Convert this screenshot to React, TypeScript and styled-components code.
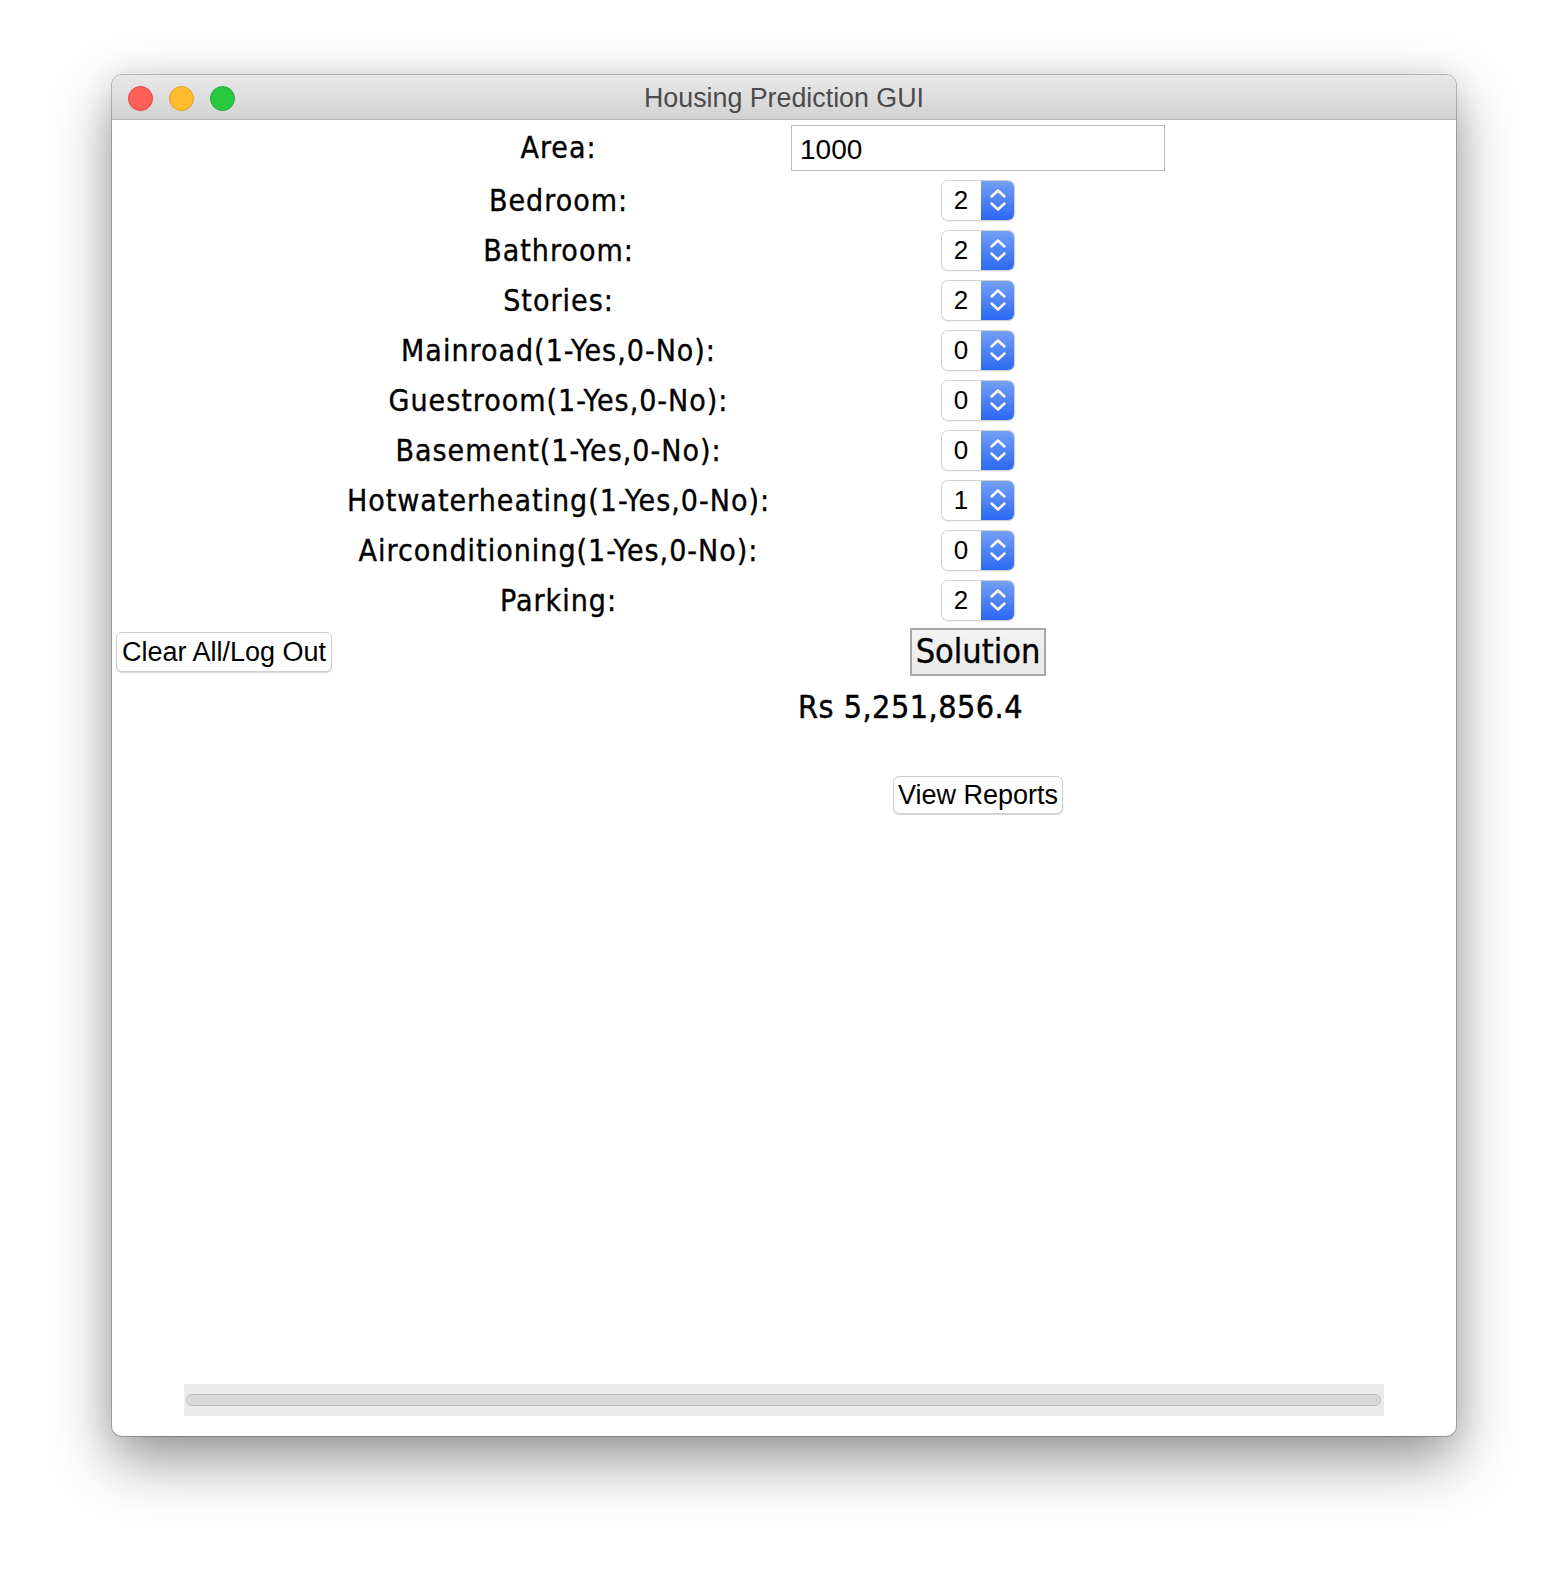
import styled, { createGlobalStyle } from "styled-components";

const GlobalStyle = createGlobalStyle`
  html, body {
    margin: 0;
    padding: 0;
    background: #ffffff;
  }
  body {
    width: 1568px;
    height: 1584px;
    overflow: hidden;
  }
`;

const labelFont = `"DejaVu Sans Condensed", "DejaVu Sans", sans-serif`;
const uiFont = `"Liberation Sans", Arial, sans-serif`;

const SPage = styled.div`
  padding: 75px 0 0 112px;
`;

const SWindow = styled.div`
  width: 1344px;
  height: 1361px;
  border-radius: 10px;
  overflow: hidden;
  background: #ffffff;
  display: flex;
  flex-direction: column;
  box-shadow: 0 0 0 1px rgba(0, 0, 0, 0.22), 0 24px 60px rgba(0, 0, 0, 0.42),
    0 0 30px rgba(0, 0, 0, 0.08);
`;

const STitleBar = styled.div`
  height: 44px;
  border-bottom: 1px solid #b3b3b3;
  background: linear-gradient(#e9e8e9, #d3d2d3);
  display: flex;
  align-items: center;
  position: relative;
`;

const SLights = styled.div`
  display: flex;
  gap: 16px;
  padding: 2px 0 0 16px;
`;

const SLight = styled.span<{ $fill: string; $edge: string }>`
  width: 23px;
  height: 23px;
  border-radius: 50%;
  background: ${({ $fill }) => $fill};
  border: 1px solid ${({ $edge }) => $edge};
`;

const STitle = styled.div`
  position: absolute;
  left: 0;
  right: 0;
  top: 8px;
  text-align: center;
  font-family: ${uiFont};
  font-size: 26.8px;
  color: #4b4b4b;
  pointer-events: none;
`;

const SBody = styled.div`
  flex: 1;
  display: flex;
  flex-direction: column;
`;

const SForm = styled.div`
  display: grid;
  grid-template-columns: 233px 427px 19px 374px;
  grid-template-rows: 55px repeat(9, 50px) 54px 50px auto;
  align-items: center;
`;

const SLabel = styled.div`
  grid-column: 2;
  justify-self: center;
  font-family: ${labelFont};
  font-stretch: condensed;
  font-size: 30px;
  letter-spacing: 1px;
  -webkit-text-stroke: 0.35px #000;
  color: #000;
  white-space: nowrap;
`;

const SEntry = styled.input`
  grid-column: 4;
  box-sizing: border-box;
  width: 374px;
  height: 46px;
  margin: 0;
  padding: 4px 8px 0;
  border: 1px solid #bcbcbc;
  font-family: ${uiFont};
  font-size: 28px;
  color: #000;
  outline: none;
`;

const SSpin = styled.div`
  grid-column: 4;
  justify-self: center;
  display: flex;
  width: 72px;
  height: 39px;
  border-radius: 6px;
  box-shadow: 0 0 0 1px #d2d2d2, 0 1px 2px rgba(0, 0, 0, 0.18);
  overflow: hidden;
`;

const SSpinValue = styled.div`
  width: 39px;
  padding-right: 1px;
  box-sizing: border-box;
  display: flex;
  align-items: center;
  justify-content: center;
  background: #fff;
  font-family: ${uiFont};
  font-size: 26px;
  color: #000;
`;

const SSpinArrows = styled.div`
  flex: 1;
  display: flex;
  align-items: center;
  justify-content: center;
  background: linear-gradient(#739ff5, #2b69f3);
`;

const SMacButton = styled.button<{ $w: number; $h: number }>`
  box-sizing: border-box;
  width: ${({ $w }) => $w}px;
  height: ${({ $h }) => $h}px;
  margin: 0;
  padding: 0;
  background: #fff;
  border: 1px solid #cfcfcf;
  border-radius: 6px;
  box-shadow: 0 1px 1px rgba(0, 0, 0, 0.16);
  font-family: ${uiFont};
  font-size: 27px;
  color: #000;
  white-space: nowrap;
`;

const SClear = styled.div`
  grid-column: 1 / 3;
  justify-self: start;
  padding-left: 4px;
  display: flex;
`;

const SSolution = styled.button`
  grid-column: 4;
  justify-self: center;
  box-sizing: border-box;
  width: 136px;
  height: 48px;
  margin: 0;
  padding: 0 0 2px;
  border: 2px solid #a7a7a7;
  background: linear-gradient(#f3f3f3, #e9e9e9);
  font-family: ${labelFont};
  font-stretch: condensed;
  font-size: 34px;
  -webkit-text-stroke: 0.35px #000;
  color: #000;
`;

const SResult = styled.div`
  grid-column: 4;
  justify-self: start;
  padding: 6px 0 0 7px;
  font-family: ${labelFont};
  font-stretch: condensed;
  font-size: 32px;
  letter-spacing: 0.5px;
  -webkit-text-stroke: 0.45px #000;
  color: #000;
`;

const SReports = styled.div`
  grid-column: 4;
  justify-self: center;
  margin-top: 47px;
  display: flex;
`;

const SSpacer = styled.div`
  flex: 1;
`;

const STrough = styled.div`
  margin: 0 72px 20px;
  height: 32px;
  background: #ebebeb;
  display: flex;
  align-items: center;
  padding: 0 3px 0 2px;
`;

const SThumb = styled.div`
  flex: 1;
  height: 10px;
  border-radius: 6px;
  background: #d9d9d9;
  border: 1px solid #bdbdbd;
`;

const Chevrons = () => (
  <svg width="18" height="24" viewBox="0 0 18 24" fill="none">
    <path d="M2.5 8.5 L9 2.5 L15.5 8.5" stroke="#fff" strokeWidth="2.4" strokeLinecap="round" strokeLinejoin="round" />
    <path d="M2.5 15.5 L9 21.5 L15.5 15.5" stroke="#fff" strokeWidth="2.4" strokeLinecap="round" strokeLinejoin="round" />
  </svg>
);

const fields: { label: string; value: string }[] = [
  { label: "Bedroom:", value: "2" },
  { label: "Bathroom:", value: "2" },
  { label: "Stories:", value: "2" },
  { label: "Mainroad(1-Yes,0-No):", value: "0" },
  { label: "Guestroom(1-Yes,0-No):", value: "0" },
  { label: "Basement(1-Yes,0-No):", value: "0" },
  { label: "Hotwaterheating(1-Yes,0-No):", value: "1" },
  { label: "Airconditioning(1-Yes,0-No):", value: "0" },
  { label: "Parking:", value: "2" },
];

const App = () => {
  return (
    <>
      <GlobalStyle />
      <SPage>
        <SWindow>
          <STitleBar>
            <SLights>
              <SLight $fill="#fe5f57" $edge="#e2463f" />
              <SLight $fill="#febc2e" $edge="#dfa123" />
              <SLight $fill="#28c840" $edge="#1dac2c" />
            </SLights>
            <STitle>Housing Prediction GUI</STitle>
          </STitleBar>
          <SBody>
            <SForm>
              <SLabel>Area:</SLabel>
              <SEntry defaultValue="1000" />
              {fields.flatMap((f) => [
                <SLabel key={f.label}>{f.label}</SLabel>,
                <SSpin key={f.label + "-spin"}>
                  <SSpinValue>{f.value}</SSpinValue>
                  <SSpinArrows>
                    <Chevrons />
                  </SSpinArrows>
                </SSpin>,
              ])}
              <SClear>
                <SMacButton $w={216} $h={40}>Clear All/Log Out</SMacButton>
              </SClear>
              <SSolution>Solution</SSolution>
              <SResult>Rs 5,251,856.4</SResult>
              <SReports>
                <SMacButton $w={170} $h={38}>View Reports</SMacButton>
              </SReports>
            </SForm>
            <SSpacer />
            <STrough>
              <SThumb />
            </STrough>
          </SBody>
        </SWindow>
      </SPage>
    </>
  );
};

export default App;
